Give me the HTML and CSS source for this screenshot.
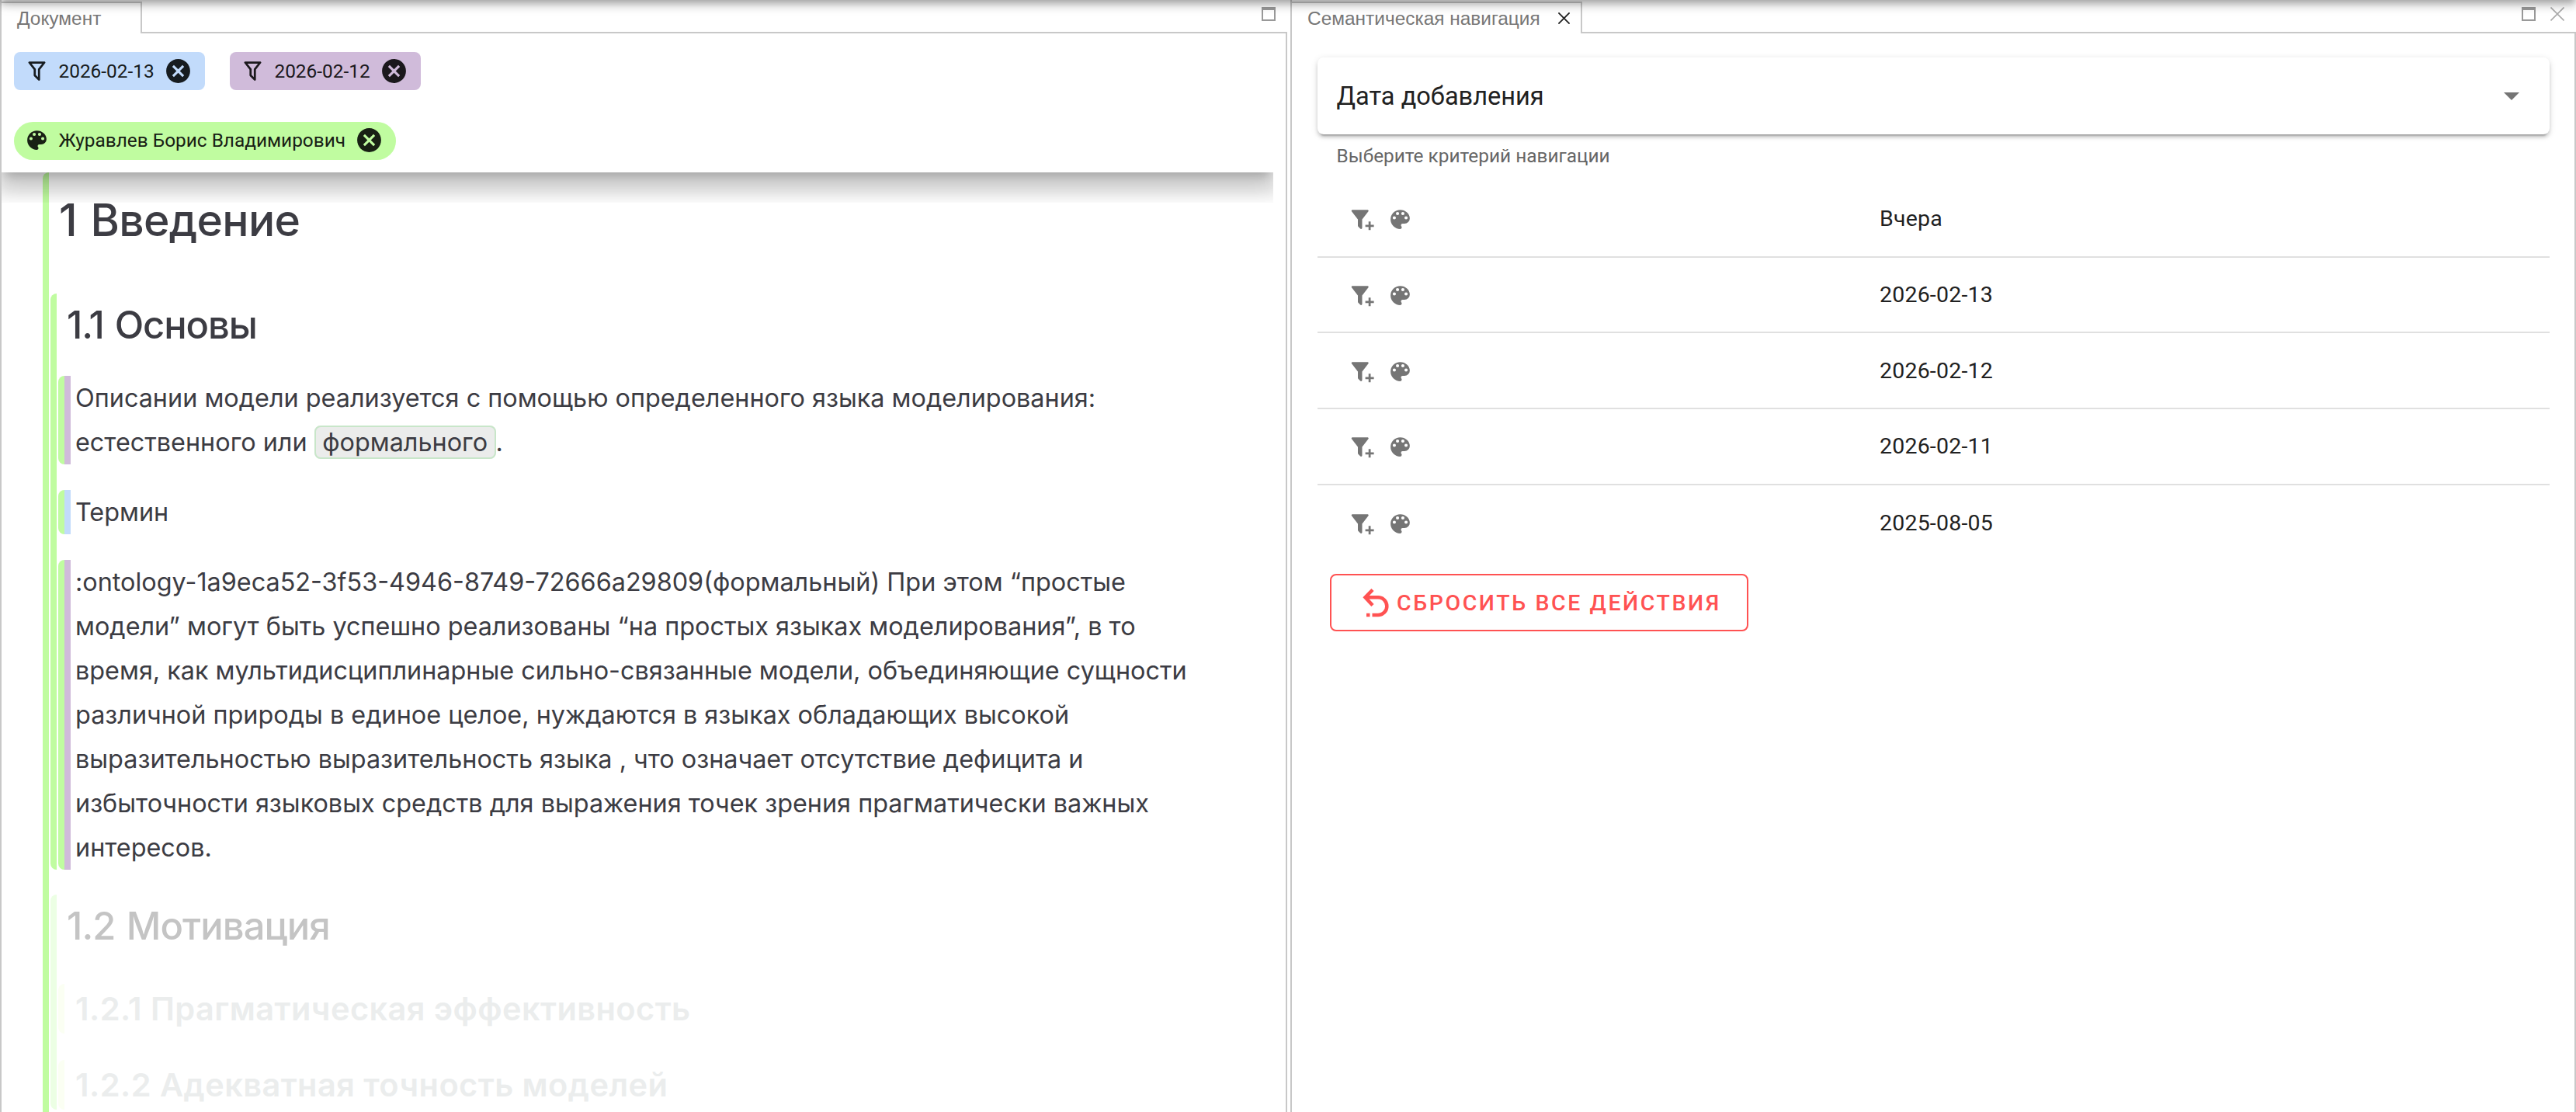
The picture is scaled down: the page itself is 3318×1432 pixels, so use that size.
FILE: index.html
```html
<!DOCTYPE html>
<html lang="ru">
  <head>
    <meta charset="UTF-8" />
    <meta name="viewport" content="width=device-width, initial-scale=1.0" />
    <title>Семантическая навигация</title>
    <link rel="stylesheet" href="styles.css">
  </head>
  <body>
    <svg class="sprite" aria-hidden="true">
      <symbol id="filter" viewBox="0 0 24 24">
        <path d="M15,19.88C15.04,20.18 14.94,20.5 14.71,20.71C14.32,21.1 13.69,21.1 13.3,20.71L9.29,16.7C9.06,16.47 8.96,16.16 9,15.87V10.75L4.21,4.62C3.87,4.19 3.95,3.56 4.38,3.22C4.57,3.08 4.78,3 5,3V3H19V3C19.22,3 19.43,3.08 19.62,3.22C20.05,3.56 20.13,4.19 19.79,4.62L15,10.75V19.88M7.04,5L11,10.06V15.58L13,17.58V10.05L16.96,5H7.04Z" />
      </symbol>
      <symbol id="filter-plus" viewBox="0 0 24 24">
        <path d="M12,12V19.88C12.04,20.18 11.94,20.5 11.71,20.71C11.32,21.1 10.69,21.1 10.3,20.71L8.29,18.7C8.06,18.47 7.96,18.16 8,17.87V12H7.97L2.21,4.62C1.87,4.19 1.95,3.56 2.38,3.22C2.57,3.08 2.78,3 3,3H17C17.22,3 17.43,3.08 17.62,3.22C18.05,3.56 18.13,4.19 17.79,4.62L12.03,12H12M15,17H18V14H20V17H23V19H20V22H18V19H15V17Z" />
      </symbol>
      <symbol id="palette" viewBox="0 0 24 24">
        <path d="M17.5,12A1.5,1.5 0 0,1 16,10.5A1.5,1.5 0 0,1 17.5,9A1.5,1.5 0 0,1 19,10.5A1.5,1.5 0 0,1 17.5,12M14.5,8A1.5,1.5 0 0,1 13,6.5A1.5,1.5 0 0,1 14.5,5A1.5,1.5 0 0,1 16,6.5A1.5,1.5 0 0,1 14.5,8M9.5,8A1.5,1.5 0 0,1 8,6.5A1.5,1.5 0 0,1 9.5,5A1.5,1.5 0 0,1 11,6.5A1.5,1.5 0 0,1 9.5,8M6.5,12A1.5,1.5 0 0,1 5,10.5A1.5,1.5 0 0,1 6.5,9A1.5,1.5 0 0,1 8,10.5A1.5,1.5 0 0,1 6.5,12M12,3A9,9 0 0,0 3,12A9,9 0 0,0 12,21A1.5,1.5 0 0,0 13.5,19.5C13.5,19.11 13.35,18.76 13.11,18.5C12.88,18.23 12.73,17.88 12.73,17.5A1.5,1.5 0 0,1 14.23,16H16A5,5 0 0,0 21,11C21,6.58 16.96,3 12,3Z" />
      </symbol>
      <symbol id="cancel" viewBox="0 0 24 24">
        <path d="M12,2C17.53,2 22,6.47 22,12C22,17.53 17.53,22 12,22C6.47,22 2,17.53 2,12C2,6.47 6.47,2 12,2M15.59,7L12,10.59L8.41,7L7,8.41L10.59,12L7,15.59L8.41,17L12,13.41L15.59,17L17,15.59L13.41,12L17,8.41L15.59,7Z" />
      </symbol>
      <symbol id="cross" viewBox="0 0 18 18">
        <path d="M0.5,0.5L17.5,17.5M17.5,0.5L0.5,17.5" fill="none" stroke="currentColor" />
      </symbol>
    </svg>

    <div class="top-shadow"></div>

    <div class="layout">
      <section class="panel document-panel">
        <div class="tabs">
          <div class="tab">Документ</div>
          <div class="tabs-rest">
            <span class="maximize"></span>
          </div>
        </div>
        <div class="document">
          <header class="filters">
            <div class="chips">
              <span class="chip blue">
                <svg class="icon"><use href="#filter" /></svg>
                2026-02-13
                <svg class="cancel"><use href="#cancel" /></svg>
              </span>
              <span class="chip purple">
                <svg class="icon"><use href="#filter" /></svg>
                2026-02-12
                <svg class="cancel"><use href="#cancel" /></svg>
              </span>
            </div>
            <div class="chips">
              <span class="chip green">
                <svg class="icon"><use href="#palette" /></svg>
                Журавлев Борис Владимирович
                <svg class="cancel"><use href="#cancel" /></svg>
              </span>
            </div>
          </header>

          <article class="block chapter">
            <h1>1 Введение</h1>
            <section class="block">
              <h2>1.1 Основы</h2>
              <div class="block leaf mark-purple">
                <p>Описании модели реализуется с помощью определенного языка моделирования: естественного или <span class="term">формального</span>.</p>
              </div>
              <div class="block leaf mark-blue">
                <p>Термин</p>
              </div>
              <div class="block leaf mark-purple">
                <p>:ontology-1a9eca52-3f53-4946-8749-72666a29809(формальный) При этом “простые модели” могут быть успешно реализованы “на простых языках моделирования”, в то время, как мультидисциплинарные сильно-связанные модели, объединяющие сущности различной природы в единое целое, нуждаются в языках обладающих высокой выразительностью выразительность языка , что означает отсутствие дефицита и избыточности языковых средств для выражения точек зрения прагматически важных интересов.</p>
              </div>
            </section>
            <section class="block faded">
              <h2>1.2 Мотивация</h2>
              <div class="block leaf hidden-part">
                <h3>1.2.1 Прагматическая эффективность</h3>
              </div>
              <div class="block leaf hidden-part">
                <h3>1.2.2 Адекватная точность моделей</h3>
              </div>
            </section>
          </article>
        </div>
      </section>

      <section class="panel navigation-panel">
        <div class="tabs">
          <div class="tab">
            Семантическая навигация
            <svg class="tab-close"><use href="#cross" /></svg>
          </div>
          <div class="tabs-rest">
            <span class="maximize"></span>
            <svg class="panel-close"><use href="#cross" /></svg>
          </div>
        </div>
        <div class="navigation">
          <div class="select">
            <span>Дата добавления</span>
            <span class="arrow"></span>
          </div>
          <p class="helper">Выберите критерий навигации</p>
          <div class="rows">
            <div class="row">
              <div class="actions">
                <svg class="icon"><use href="#filter-plus" /></svg>
                <svg class="icon"><use href="#palette" /></svg>
              </div>
              <span>Вчера</span>
            </div>
            <div class="row">
              <div class="actions">
                <svg class="icon"><use href="#filter-plus" /></svg>
                <svg class="icon"><use href="#palette" /></svg>
              </div>
              <span>2026-02-13</span>
            </div>
            <div class="row">
              <div class="actions">
                <svg class="icon"><use href="#filter-plus" /></svg>
                <svg class="icon"><use href="#palette" /></svg>
              </div>
              <span>2026-02-12</span>
            </div>
            <div class="row">
              <div class="actions">
                <svg class="icon"><use href="#filter-plus" /></svg>
                <svg class="icon"><use href="#palette" /></svg>
              </div>
              <span>2026-02-11</span>
            </div>
            <div class="row">
              <div class="actions">
                <svg class="icon"><use href="#filter-plus" /></svg>
                <svg class="icon"><use href="#palette" /></svg>
              </div>
              <span>2025-08-05</span>
            </div>
          </div>
          <button class="reset" type="button">
            <svg class="undo" viewBox="0 0 36 40">
              <path d="M5,13.3H21A11.3,11.3 0 0 1 21,36H13.5M14,3.5L4.5,13.3L14,23.5M6,36H10.5" />
            </svg>
            Сбросить все действия
          </button>
        </div>
      </section>
    </div>
  </body>
</html>
```
FILE: styles.css
```css
* {
  box-sizing: border-box;
}

body {
  margin: 0;
  background-color: #fff;
  font-family: Roboto, sans-serif;
  color: #212121;
  overflow: hidden;
}

h1,
h2,
h3,
p {
  margin: 0;
}

svg {
  fill: currentColor;
  flex: none;
}

.sprite {
  display: none;
}

/* shadow of the app bar above the page */
.top-shadow {
  position: fixed;
  top: -100px;
  left: 0;
  right: 0;
  height: 100px;
  z-index: 10;
  box-shadow: 0 4px 8px -2px rgba(0, 0, 0, 0.2),
    0 8px 10px 0 rgba(0, 0, 0, 0.16), 0 2px 20px 0 rgba(0, 0, 0, 0.12);
}

.layout {
  display: flex;
  gap: 4px;
  height: 100vh;
}

.panel {
  display: flex;
  flex-direction: column;
  border: 0 solid #c8c8c8;
  border-left-width: 2px;
}

.document-panel {
  width: 1658px;
}

.navigation-panel {
  flex: 1;
}

/* Tabs */
.tabs {
  display: flex;
  flex: none;
  height: 43px;
  padding-top: 2px;
}

.tab {
  display: flex;
  align-items: center;
  padding: 0 14px 0 20px;
  border-top: 2px solid #c8c8c8;
  border-right: 2px solid #c8c8c8;
  font-family: "Liberation Sans", sans-serif;
  font-size: 24.43px;
  color: #777;
}

.document-panel .tab {
  width: 181px;
}

.navigation-panel .tab {
  width: 374px;
  justify-content: space-between;
}

.tab-close {
  width: 15px;
  height: 15px;
  margin-bottom: 1px;
  color: #222;
  stroke-width: 2.2;
}

.tabs-rest {
  flex: 1;
  display: flex;
  justify-content: flex-end;
  gap: 19px;
  padding: 7px 15px 0;
  border-bottom: 2px solid #c8c8c8;
}

.maximize {
  width: 18px;
  height: 18px;
  border: 2px solid #999;
  border-top-width: 4px;
}

.panel-close {
  width: 18px;
  height: 18px;
  color: #aaa;
  stroke-width: 1.6;
}

/* Document */
.document {
  flex: 1;
  min-height: 0;
  overflow: hidden;
  padding-right: 16px;
  border-right: 2px solid #c8c8c8;
}

.filters {
  position: relative;
  z-index: 1;
  height: 179px;
  padding: 24px 16px 0;
  background-color: #fff;
  box-shadow: 0 10px 10px -6px rgba(0, 0, 0, 0.14),
    0 16px 24px 3px rgba(0, 0, 0, 0.13), 0 8px 34px 6px rgba(0, 0, 0, 0.1),
    0 26px 16px 8px rgba(0, 0, 0, 0.05);
  clip-path: inset(0 0 -39px 0);
}

.chips {
  display: flex;
  gap: 32px;
  margin-bottom: 41px;
}

.chip {
  display: flex;
  align-items: center;
  height: 49px;
  padding: 0 16px 1px 13px;
  border-radius: 8px;
  font-size: 24.4px;
  white-space: nowrap;
}

.chip .icon {
  margin-right: 11.5px;
}

.icon {
  width: 33px;
  height: 33px;
}

.cancel {
  width: 37px;
  height: 37px;
  margin-left: 12.3px;
}

.blue {
  background-color: #c2dbfb;
  color: #171c20;
}

.purple {
  background-color: #d0bbda;
  color: #1b181c;
}

.green {
  padding-bottom: 3px;
  background-color: #c0fca0;
  color: #182014;
  border-radius: 25px;
}

.block {
  position: relative;
  padding-left: 10px;
}

/* coloured strip along the left side of a block */
.block::before {
  content: "";
  position: absolute;
  left: 0;
  top: 0;
  bottom: 0;
  width: 8px;
  border-radius: 8px 0 0 8px;
  background-color: #c0fca0;
}

.chapter {
  width: 1499px;
  height: 1300px;
  margin-left: 53px;
  padding-top: 29px;
  font-family: Inter, sans-serif;
  font-size: 32.36px;
  line-height: 57px;
  color: #3c3c43;
}

h1 {
  margin: 0 0 61px 11px;
  font-size: 57px;
  line-height: 66px;
  font-weight: 500;
  letter-spacing: -0.7px;
  word-spacing: 3px;
}

h2 {
  margin: 0 0 25px 11px;
  padding-top: 1px;
  font-size: 48.9px;
  line-height: 80px;
  font-weight: 500;
  letter-spacing: -1.1px;
  word-spacing: 2px;
}

h3 {
  font-size: 41.5px;
  line-height: 64px;
  font-weight: 600;
  letter-spacing: 0.45px;
}

section.block {
  margin-bottom: 32px;
}

.leaf {
  padding-left: 22px;
}

.leaf + .leaf {
  margin-top: 33px;
}

.mark-purple::after,
.mark-blue::after {
  content: "";
  position: absolute;
  left: 8px;
  top: 0;
  bottom: 0;
  width: 8px;
}

.mark-purple::after {
  background-color: #d0bbda;
}

.mark-blue::after {
  background-color: #c2dbfb;
}

.term {
  padding: 0 8.5px;
  border: 2px solid #c8e6c9;
  border-radius: 8px;
  background-color: #ebeceb;
}

.faded::before {
  background-color: #ecffe4;
}

.faded h2 {
  margin-bottom: 34px;
  color: #c4c4c4;
  letter-spacing: -0.9px;
}

.hidden-part {
  color: #ebeded;
}

.hidden-part + .hidden-part {
  margin-top: 34px;
}

.hidden-part::before {
  background-color: #fbfff3;
}

/* Navigation */
.navigation {
  flex: 1;
  padding: 31px 32px 0 33px;
  border-right: 2px solid #c8c8c8;
}

.select {
  display: flex;
  align-items: center;
  justify-content: space-between;
  height: 99px;
  padding: 0 39px 0 24.5px;
  border-radius: 8px;
  font-size: 32.57px;
  box-shadow: 0 6px 2px -4px rgba(0, 0, 0, 0.2),
    0 4px 4px 0 rgba(0, 0, 0, 0.14), 0 2px 10px 0 rgba(0, 0, 0, 0.12);
}

.arrow {
  border: 10px solid transparent;
  border-top-color: #757575;
  border-bottom: none;
}

.helper {
  padding: 11px 24.5px 0;
  font-size: 24.4px;
  line-height: 34px;
  color: #666;
}

.rows {
  margin-top: 16px;
}

.row {
  display: grid;
  grid-template-columns: 724px 1fr;
  align-items: center;
  height: 97.7px;
  border-bottom: 2px solid #e0e0e0;
  font-size: 28.5px;
  letter-spacing: 0.2px;
}

.row:last-child {
  border-bottom: none;
}

.actions {
  display: flex;
  gap: 16px;
  padding: 2px 0 0 41px;
  color: #757575;
}

.reset {
  display: flex;
  align-items: center;
  height: 74px;
  margin: 17px 0 0 16px;
  padding: 0 33px 0 39px;
  border: 2px solid #ff5252;
  border-radius: 8px;
  background: none;
  color: #ff5252;
  font-family: Roboto, sans-serif;
  font-size: 28.5px;
  font-weight: 500;
  letter-spacing: 2.58px;
  text-transform: uppercase;
  cursor: pointer;
}

.undo {
  width: 36px;
  height: 40px;
  margin-right: 9px;
  fill: none;
  stroke: currentColor;
  stroke-width: 4.5;
}
```
